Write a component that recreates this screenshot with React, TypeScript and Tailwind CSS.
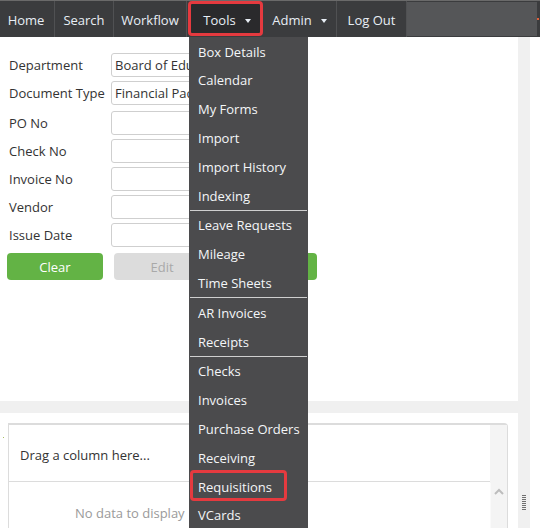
import React from "react"

const menuGroups = [
  ["Box Details", "Calendar", "My Forms", "Import", "Import History", "Indexing"],
  ["Leave Requests", "Mileage", "Time Sheets"],
  ["AR Invoices", "Receipts"],
  ["Checks", "Invoices", "Purchase Orders", "Receiving", "Requisitions", "VCards"],
]

const fields = [
  { label: "Department", value: "Board of Education", gap: "mb-[4px]" },
  { label: "Document Type", value: "Financial Package", gap: "mb-[6px]" },
  { label: "PO No", value: "", gap: "mb-[4px]" },
  { label: "Check No", value: "", gap: "mb-[4px]" },
  { label: "Invoice No", value: "", gap: "mb-[4px]" },
  { label: "Vendor", value: "", gap: "mb-[4px]" },
  { label: "Issue Date", value: "", gap: "mb-[6px]" },
]

function Caret() {
  return <span className="ml-[9px] inline-block w-0 h-0 border-x-[3.5px] border-x-transparent border-t-[4px] border-t-[#e8eef5]" />
}

function Sep() {
  return <div className="w-px h-full bg-[#505153]" />
}

export default function App() {
  return (
    <div
      className="relative w-[540px] h-[528px] overflow-hidden bg-white text-[13px] text-[#333]"
      style={{ fontFamily: '"Open Sans", "Noto Sans", sans-serif' }}
    >
      {/* Top nav */}
      <nav className="flex h-[37px] bg-[#3b3c3e] border-t border-[#6a6a6a] text-[#e8eef5]">
        <div className="w-[54px] flex items-center justify-center pr-[2px] pt-[3px]">Home</div>
        <Sep />
        <div className="w-[58px] flex items-center justify-center pt-[3px]">Search</div>
        <Sep />
        <div className="w-[72px] flex items-center justify-center pt-[3px]">Workflow</div>
        <Sep />
        <div className="relative w-[76px] flex items-center justify-center pl-[4px] pt-[3px]">
          <div className="absolute left-[1px] right-0 top-0 bottom-[1px] bg-[#2a2a2c] border-[3px] border-[#e53a3f] rounded-[4px]" />
          <span className="relative flex items-center">
            Tools
            <Caret />
          </span>
        </div>
        <div className="w-[73px] flex items-center justify-center pt-[3px]">
          Admin
          <Caret />
        </div>
        <Sep />
        <div className="w-[69px] flex items-center justify-center pt-[3px]">Log Out</div>
        <Sep />
        <div className="w-[130px] my-[1px] bg-[#555658]" />
        <div className="flex-1 flex items-center">
          <span className="w-[2px] h-[2px] bg-[#e0603a]" />
        </div>
      </nav>

      <div className="flex h-[491px]">
        {/* Main column */}
        <div className="w-[518px] flex flex-col">
          {/* Search form panel */}
          <div className="h-[364px] bg-white pt-[16px]">
            {fields.map((f) => (
              <div key={f.label} className={`flex items-center ${f.gap}`}>
                <label className="w-[111px] pl-[9px] leading-none pt-[1px]">{f.label}</label>
                <div className="w-[150px] h-[24px] border border-[#cfcfcf] rounded-[3px] pl-[3px] flex items-center overflow-hidden whitespace-nowrap">
                  <span className="w-[74px] overflow-hidden shrink-0 pt-[1px]">{f.value}</span>
                </div>
              </div>
            ))}
            <div className="flex ml-[7px] gap-[11px]">
              <button className="w-[96px] h-[27px] rounded-[4px] bg-[#63b345] text-white pt-[2px]">Clear</button>
              <button className="w-[96px] h-[27px] rounded-[4px] bg-[#dcdcdc] text-[#a9a9a9] pt-[2px]">Edit</button>
              <button className="w-[96px] h-[27px] rounded-[4px] bg-[#63b345] text-white pt-[2px]">Search</button>
            </div>
          </div>

          <div className="h-[12px] bg-[#f0f0f0]" />

          {/* Grid panel */}
          <div className="flex-1 relative bg-white pt-[10px] pl-[8px] pr-[10px]">
            <span className="absolute left-[3px] top-[24px] w-px h-px bg-[#a8c060]" />
            <div className="flex h-full border-t-2 border-x border-[#dcdcdc] rounded-tr-[4px]">
              <div className="flex-1 flex flex-col">
                <div className="h-[57px] border-b border-[#dcdcdc] flex items-center pl-[11px] pt-[6px]">
                  Drag a column here...
                </div>
                <div className="pl-[66px] pt-[22px] text-[#9a9a9a]">No data to display</div>
              </div>
              <div className="w-[17px] flex flex-col bg-[#f4f4f4]">
                <div className="h-[58px]" />
                <div className="flex-1 border-l border-[#fafafa] flex justify-center pt-[5px]">
                  <svg width="10" height="7" viewBox="0 0 10 7">
                    <path d="M1 6 L5 2 L9 6" fill="none" stroke="#bdbdbd" strokeWidth="2" />
                  </svg>
                </div>
              </div>
            </div>
          </div>
        </div>

        {/* Right splitter strip */}
        <div className="w-[12px] bg-[#f0f0f0] flex flex-col">
          <div className="mt-[458px] ml-[4px] flex flex-col gap-px">
            {Array.from({ length: 8 }).map((_, i) => (
              <span key={i} className="w-[4px] h-px bg-[#707070]" />
            ))}
          </div>
        </div>
        <div className="flex-1 bg-white" />
      </div>

      {/* Tools dropdown */}
      <div className="absolute left-[189px] top-[37px] w-[119px] bg-[#4b4b4d] text-[#f4f6f8]">
        {menuGroups.map((group, gi) => (
          <div key={gi}>
            {gi > 0 && <div className="mx-[1px] h-px bg-[#cfcfcf]" />}
            {group.map((item) => (
              <div key={item} className="relative h-[28.8px] flex items-center pl-[9px] pt-[2px] whitespace-nowrap">
                {item === "Requisitions" && (
                  <span className="absolute left-[1px] w-[97px] top-[-2px] bottom-[0px] border-[3px] border-[#e53a3f] rounded-[4px]" />
                )}
                <span className="relative">{item}</span>
              </div>
            ))}
          </div>
        ))}
      </div>
    </div>
  )
}
